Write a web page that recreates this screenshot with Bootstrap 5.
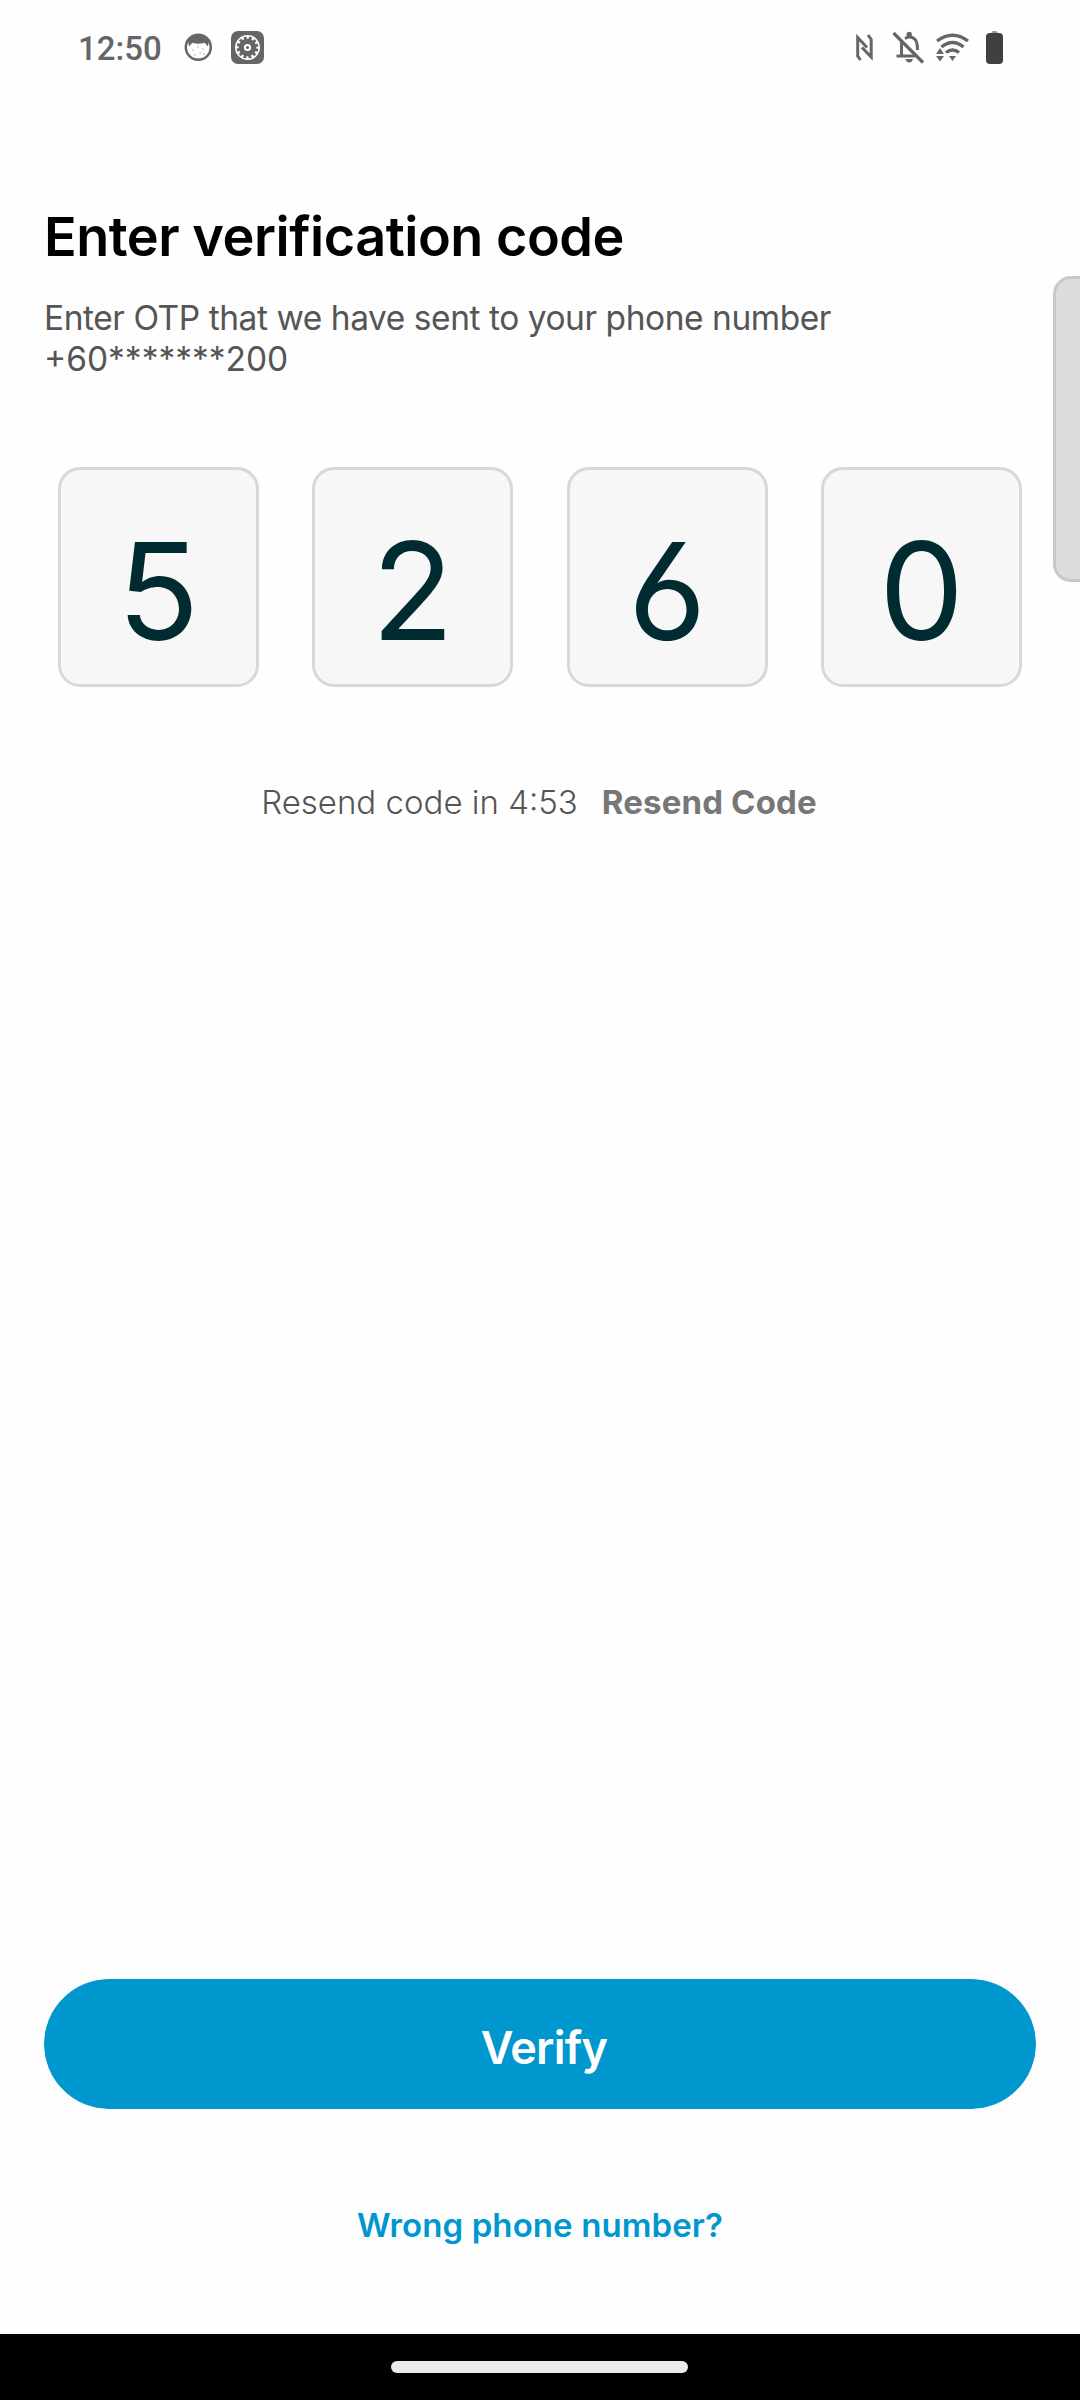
<!DOCTYPE html>
<html lang="en">
<head>
<meta charset="utf-8">
<meta name="viewport" content="width=device-width, initial-scale=1">
<title>Enter verification code</title>
<link href="https://cdn.jsdelivr.net/npm/bootstrap@5.3.0/dist/css/bootstrap.min.css" rel="stylesheet">
<style>
body{font-family:Inter,"Open Sans",sans-serif;background:#fefefe;color:#000}
.phone{width:1080px;height:2400px;overflow:hidden}
.statusbar{height:95px;padding:0 75px 0 78px;color:#666}
.clock{font:500 33px/40px Roboto,sans-serif;letter-spacing:0;width:106px;padding-top:2px}
.content{padding:110px 44px 0}
.otp-title{font-size:54px;line-height:64px;font-weight:600;letter-spacing:-.48px;margin-bottom:29px;white-space:nowrap}
.otp-text{font-size:33.5px;line-height:40.7px;color:#555;margin:0 0 87.6px;white-space:nowrap}
.otp-text .sentence{letter-spacing:-.45px}
.otp-grid{padding:0 14px;gap:53.7px}
.otp-box{flex:1 1 0;height:220px;border:3px solid #d8d8d8;border-radius:22px;background:#f7f7f7;color:#002b31;font-size:135px;line-height:160px;padding-top:41px;font-feature-settings:"ss01"}
.resend{margin-top:95px;padding-right:2px;font-size:33px;line-height:40px;color:#555;white-space:nowrap}
.resend b{color:#777;letter-spacing:.15px}
.actions{padding:0 44px}
.btn-verify{--bs-btn-color:#fff;--bs-btn-bg:#0097cf;--bs-btn-border-color:#0097cf;height:130px;font-size:45px;font-weight:600;letter-spacing:-.7px;padding:8px 0 0 8px}
.wrong{font-size:33px;line-height:40px;font-weight:600;color:#0097cf;letter-spacing:.1px;text-decoration:none;margin:96px 0 89px}
.home-bar{height:66px;background:#000;padding:27px 1px 0 0}
.home-bar span{width:297px;height:12px;background:#ebebeb}
.edge{right:-4px;top:276px;width:31px;height:306px;border:3px solid #c8c8c8;border-radius:18px 0 0 18px;background:#dcdcdc}
</style>
</head>
<body>
<main class="phone position-relative d-flex flex-column">
  <header class="statusbar d-flex align-items-center justify-content-between">
    <div class="d-flex align-items-center">
      <span class="clock">12:50</span>
      <svg width="47" height="33" viewBox="184 31 47 33">
        <circle cx="198.3" cy="47.3" r="12.5" fill="#fff" stroke="#666" stroke-width="2.5"/>
        <path d="M188 41Q191 34.5 198.3 34.5Q205.600 34.5 208.800 41L208 46.500L204.500 42.800Q198.300 44.500 192.500 42.800L189 46.500Z" fill="#666"/>
        <g fill="#aaa"><circle cx="193" cy="50" r=".8"/><circle cx="198" cy="47" r=".8"/><circle cx="203" cy="49" r=".8"/><circle cx="200" cy="53" r=".8"/><circle cx="195" cy="55" r=".8"/><circle cx="204" cy="54" r=".8"/></g>
      </svg>
      <svg width="33" height="33" viewBox="0 0 33 33">
        <rect width="33" height="33" rx="7" fill="#666"/>
        <circle cx="16.500" cy="16.500" r="11.700" fill="none" stroke="#fff" stroke-width="1.600"/>
        <circle cx="16.500" cy="16.500" r="10.200" fill="none" stroke="#fff" stroke-width="2.800" stroke-dasharray="2.400 2.941" stroke-dashoffset="1.200"/>
        <circle cx="16.500" cy="16.500" r="2.600" fill="none" stroke="#fff" stroke-width="2"/>
      </svg>
    </div>
    <svg width="152" height="36" viewBox="853 29 152 36">
      <g fill="none" stroke="#666" stroke-width="3">
        <path d="M860.500 59L857.700 55V36.500L867 46.500M868 34L871.200 38.500V56L862 46.500"/>
        <path d="M893.500 32L923 61.500" stroke-width="3.200"/>
        <path d="M901.500 41V54.500M896.500 55H915M905 37.500Q911 34 915.500 39Q917.500 42 917.500 49"/>
      </g>
      <circle cx="909.200" cy="33.500" r="2.700" fill="#666"/>
      <path d="M905.500 58H913Q912 61.500 909.200 61.500Q906.500 61.500 905.500 58Z" fill="#666"/>
      <g fill="none" stroke="#666" stroke-width="3.400">
        <path d="M937 40Q952.500 28.500 968 40"/>
        <path d="M941.500 46Q952.500 37 963.500 46"/>
        <path d="M946 51.500Q952.500 46.500 959 51.500"/>
      </g>
      <path d="M949 55H956L952.500 60ZM936 53L940 47L944 53ZM936 55H944L940 60.500Z" fill="#666"/>
      <rect x="991.500" y="30" width="6" height="5" rx="1.500" fill="#999"/>
      <rect x="986" y="32" width="17" height="31" rx="4" fill="#404040"/>
    </svg>
  </header>
  <section class="content">
    <h1 class="otp-title">Enter verification code</h1>
    <p class="otp-text"><span class="sentence">Enter OTP that we have sent to your phone number</span><br>+60*******200</p>
    <div class="otp-grid d-flex text-center">
      <div class="otp-box">5</div>
      <div class="otp-box">2</div>
      <div class="otp-box">6</div>
      <div class="otp-box">0</div>
    </div>
    <div class="resend d-flex justify-content-center"><span class="fw-light">Resend code in 4:53</span><b class="ms-4">Resend Code</b></div>
  </section>
  <footer class="mt-auto d-flex flex-column text-center">
    <div class="actions d-grid"><button type="button" class="btn btn-verify rounded-pill">Verify</button></div>
    <a class="wrong" href="#">Wrong phone number?</a>
    <div class="home-bar d-flex justify-content-center"><span class="rounded-pill"></span></div>
  </footer>
  <div class="edge position-absolute"></div>
</main>
<script src="https://cdn.jsdelivr.net/npm/bootstrap@5.3.0/dist/js/bootstrap.bundle.min.js"></script>
</body>
</html>
